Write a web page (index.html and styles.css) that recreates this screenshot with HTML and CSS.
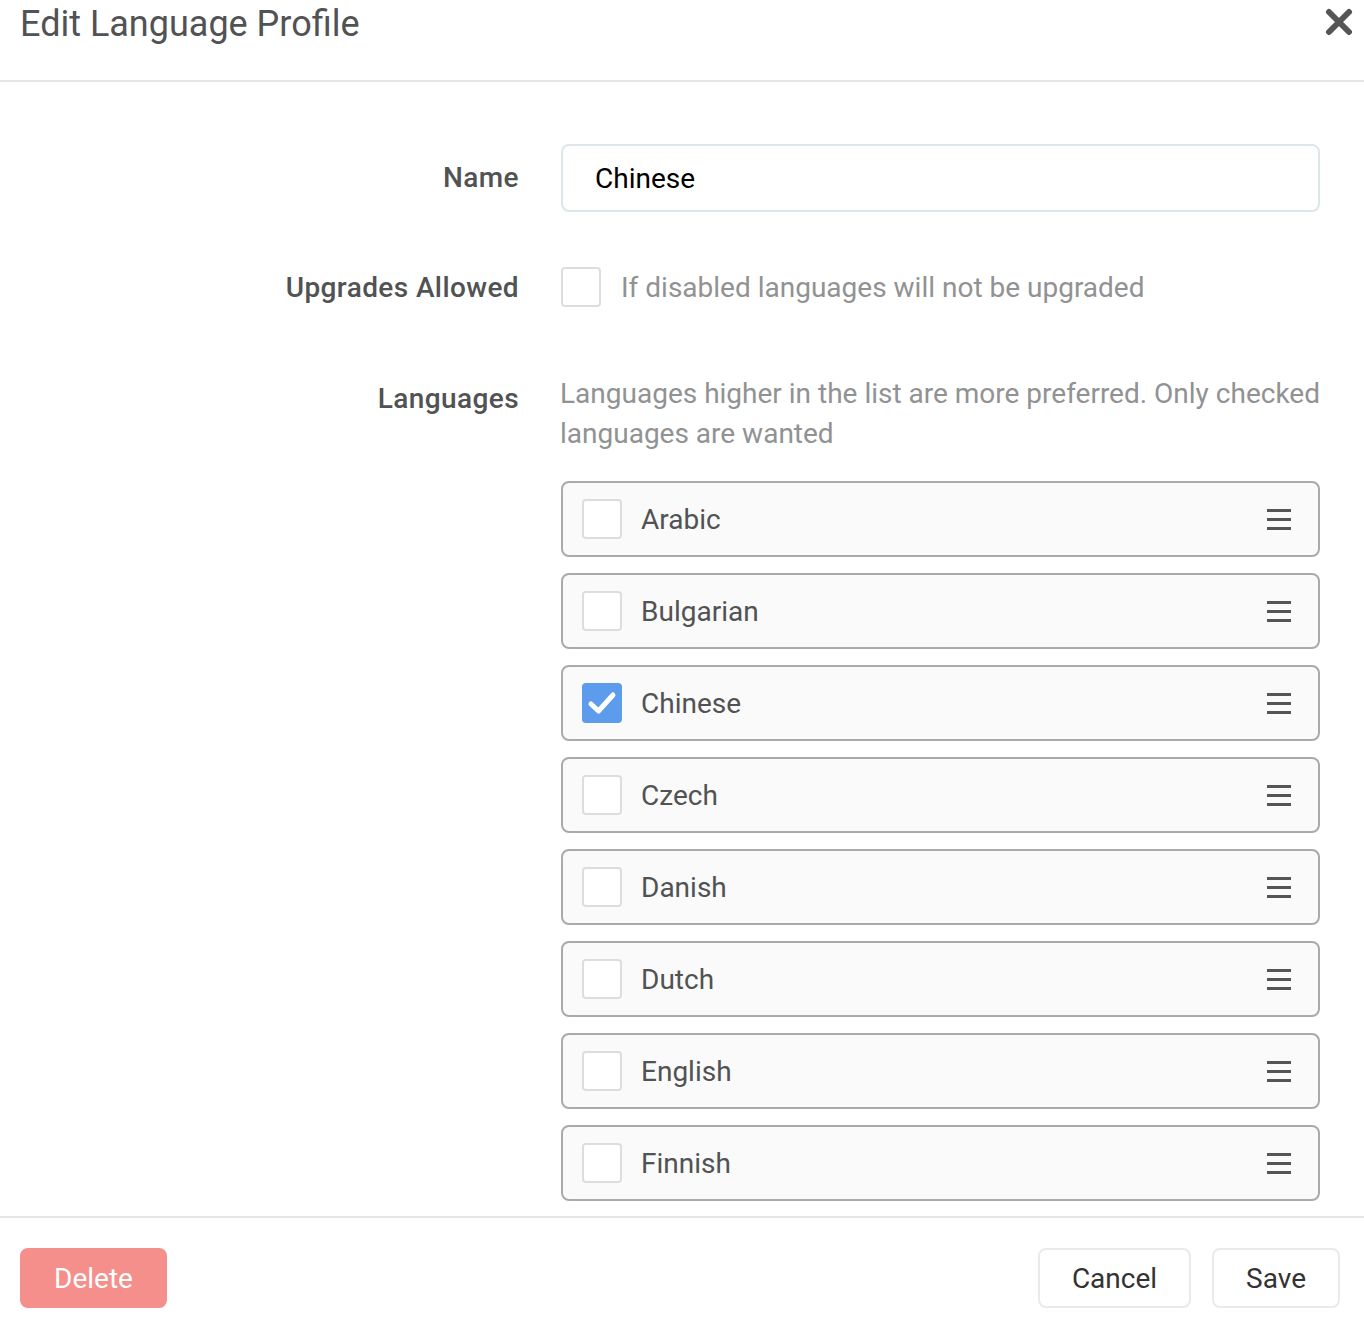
FILE: index.html
```html
<!DOCTYPE html>
<html>
<head>
<meta charset="utf-8">
<link rel="stylesheet" href="styles.css">
</head>
<body>
<div class="modal">
  <div class="modal-header">
    <div class="title">Edit Language Profile</div>
    <button class="close" aria-label="Close">
      <svg width="28" height="28" viewBox="0 0 28 28"><path d="M4 4 L24 24 M24 4 L4 24" stroke="#555" stroke-width="6" stroke-linecap="round"/></svg>
    </button>
  </div>
  <div class="modal-body">
    <div class="group">
      <div class="label label-center">Name</div>
      <div class="control"><div class="input">Chinese</div></div>
    </div>
    <div class="group">
      <div class="label label-center label-up">Upgrades Allowed</div>
      <div class="control check-line">
        <span class="checkbox"></span>
        <span class="help-inline">If disabled languages will not be upgraded</span>
      </div>
    </div>
    <div class="group group-top">
      <div class="label label-top">Languages</div>
      <div class="control">
        <div class="help">Languages higher in the list are more preferred. Only checked languages are wanted</div>
        <div class="list">
          <div class="item"><span class="checkbox"></span><span class="name">Arabic</span><span class="drag"><i></i><i></i><i></i></span></div>
          <div class="item"><span class="checkbox"></span><span class="name">Bulgarian</span><span class="drag"><i></i><i></i><i></i></span></div>
          <div class="item"><span class="checkbox checked"><svg width="40" height="40" viewBox="0 0 40 40"><path d="M9 21 L16.5 28 L31 12" fill="none" stroke="#fff" stroke-width="5" stroke-linecap="round" stroke-linejoin="round"/></svg></span><span class="name">Chinese</span><span class="drag"><i></i><i></i><i></i></span></div>
          <div class="item"><span class="checkbox"></span><span class="name">Czech</span><span class="drag"><i></i><i></i><i></i></span></div>
          <div class="item"><span class="checkbox"></span><span class="name">Danish</span><span class="drag"><i></i><i></i><i></i></span></div>
          <div class="item"><span class="checkbox"></span><span class="name">Dutch</span><span class="drag"><i></i><i></i><i></i></span></div>
          <div class="item"><span class="checkbox"></span><span class="name">English</span><span class="drag"><i></i><i></i><i></i></span></div>
          <div class="item"><span class="checkbox"></span><span class="name">Finnish</span><span class="drag"><i></i><i></i><i></i></span></div>
        </div>
      </div>
    </div>
  </div>
  <div class="modal-footer">
    <button class="btn btn-danger">Delete</button>
    <div class="right">
      <button class="btn btn-default">Cancel</button>
      <button class="btn btn-default">Save</button>
    </div>
  </div>
</div>
</body>
</html>
```

FILE: styles.css
```css
html, body {
  margin: 0;
  padding: 0;
  background: #fff;
}
body {
  font-family: Roboto, "Liberation Sans", sans-serif;
  color: #515253;
  font-size: 28px;
}
.modal {
  width: 1364px;
}
.modal-header {
  height: 80px;
  border-bottom: 2px solid #e5e5e5;
  display: flex;
  justify-content: space-between;
  align-items: flex-start;
}
.title {
  font-size: 36px;
  line-height: 36px;
  padding: 6px 0 0 20px;
  color: #515253;
}
.close {
  border: 0;
  background: none;
  padding: 0;
  margin: 8px 11px 0 0;
  width: 28px;
  height: 28px;
  cursor: pointer;
}
.close svg { display: block; }
.modal-body {
  padding: 62px 45px 15px 0;
  border-bottom: 2px solid #e5e5e5;
}
.group {
  display: flex;
  margin-bottom: 40px;
}
.group:last-child { margin-bottom: 0; }
.label {
  width: 519px;
  flex: none;
  text-align: right;
  font-weight: 500;
  letter-spacing: 0.4px;
  line-height: 40px;
  padding-right: 42px;
  box-sizing: content-box;
}
.label-center {
  align-self: center;
}
.label-up {
  padding-top: 3px;
}
.label-top {
  padding-top: 19px;
}
.control {
  width: 759px;
  flex: none;
}
.input {
  height: 68px;
  box-sizing: border-box;
  border: 2px solid #dde6e9;
  border-radius: 8px;
  padding: 0 32px;
  display: flex;
  align-items: center;
  color: #000;
}
.check-line {
  height: 68px;
  box-sizing: border-box;
  display: flex;
  align-items: center;
  padding-top: 2px;
}
.checkbox {
  width: 40px;
  height: 40px;
  box-sizing: border-box;
  border: 2px solid #ddd;
  border-radius: 4px;
  background: #fff;
  flex: none;
  display: block;
}
.checkbox.checked {
  background: #5d9cec;
  border-color: #5d9cec;
}
.checkbox.checked svg {
  display: block;
  margin: -2px;
}
.help-inline {
  margin-left: 20px;
  color: #909293;
}
.help {
  color: #909293;
  line-height: 40px;
  padding-top: 14px;
  margin-left: -1px;
  margin-right: -12px;
}
.list {
  margin-top: 27px;
  display: flex;
  flex-direction: column;
  gap: 16px;
}
.item {
  height: 76px;
  box-sizing: border-box;
  border: 2px solid #aaa;
  border-radius: 8px;
  background: #fafafa;
  display: flex;
  align-items: center;
  padding: 0 27px 0 19px;
}
.item .name {
  flex: 1;
  margin-left: 19px;
  color: #515253;
}
.drag {
  width: 24px;
  display: flex;
  flex-direction: column;
  gap: 6px;
}
.drag i {
  display: block;
  height: 3px;
  background: #555;
}
.modal-footer {
  display: flex;
  justify-content: space-between;
  padding: 30px 24px 20px 20px;
}
.right {
  display: flex;
  gap: 21px;
}
.btn {
  font-family: Roboto, "Liberation Sans", sans-serif;
  font-size: 28px;
  height: 60px;
  padding: 0 32px;
  border-radius: 8px;
  cursor: pointer;
  box-sizing: border-box;
}
.btn-danger {
  background: #f58f8c;
  color: #fff;
  border: 2px solid #f58f8c;
}
.btn-default {
  background: #fff;
  color: #333;
  border: 2px solid #eaeaea;
}
```
